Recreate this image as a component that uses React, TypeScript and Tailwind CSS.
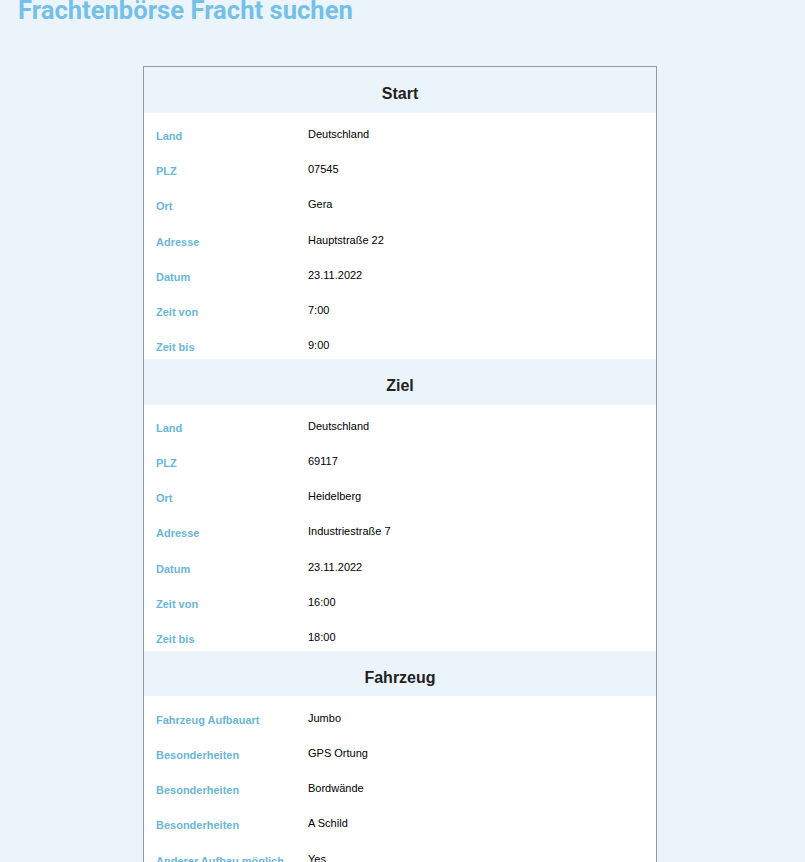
import React from "react";

const sections: { title: string; rows: [string, string][] }[] = [
  {
    title: "Start",
    rows: [
      ["Land", "Deutschland"],
      ["PLZ", "07545"],
      ["Ort", "Gera"],
      ["Adresse", "Hauptstraße 22"],
      ["Datum", "23.11.2022"],
      ["Zeit von", "7:00"],
      ["Zeit bis", "9:00"],
    ],
  },
  {
    title: "Ziel",
    rows: [
      ["Land", "Deutschland"],
      ["PLZ", "69117"],
      ["Ort", "Heidelberg"],
      ["Adresse", "Industriestraße 7"],
      ["Datum", "23.11.2022"],
      ["Zeit von", "16:00"],
      ["Zeit bis", "18:00"],
    ],
  },
  {
    title: "Fahrzeug",
    rows: [
      ["Fahrzeug Aufbauart", "Jumbo"],
      ["Besonderheiten", "GPS Ortung"],
      ["Besonderheiten", "Bordwände"],
      ["Besonderheiten", "A Schild"],
      ["Anderer Aufbau möglich", "Yes"],
      ["Ladungsart", "Stückgut"],
    ],
  },
];

export default function App() {
  return (
    <div className="min-h-[862px] bg-[#ecf4fb] overflow-hidden" style={{ fontFamily: "'Liberation Sans', Arial, sans-serif" }}>
      <h1 className="ml-[18px] -mt-[5px] text-[25.6px] leading-[30px] font-bold text-[#74c0e6] font-['Roboto',sans-serif]">
        Frachtenbörse Fracht suchen
      </h1>
      <div className="ml-[143px] mt-[41px] w-[514px] border border-[#999999] bg-white">
        {sections.map((s) => (
          <div key={s.title}>
            <div className="h-[45.6px] pt-[9px] bg-[#ecf4fb] flex items-center justify-center text-[16px] font-bold text-[#222222]">
              {s.title}
            </div>
            {s.rows.map(([k, v], i) => (
              <div key={i} className="h-[35.2px] pt-[8px] flex items-center">
                <div className="w-[164px] pl-[12px] pt-[4px] text-[11px] font-bold text-[#6ab6d6]">{k}</div>
                <div className="text-[11px] text-black">{v}</div>
              </div>
            ))}
          </div>
        ))}
      </div>
    </div>
  );
}
